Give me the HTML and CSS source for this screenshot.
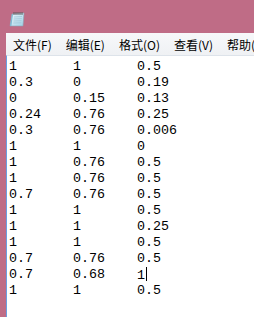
FILE: index.html
```
<!DOCTYPE html>
<html lang="zh-CN">

<head>
    <meta charset="UTF-8">
    <meta name="viewport" content="width=device-width, initial-scale=1.0">
    <title>记事本</title>
    <link rel="stylesheet" href="styles.css">
</head>

<body>
    <div class="window">
        <header class="titlebar">
            <svg class="app-icon" width="16" height="16" viewBox="0 0 16 16">
                <defs>
                    <linearGradient id="page" x1="0" y1="0" x2="1" y2="1">
                        <stop offset="0" stop-color="#eef7fb" />
                        <stop offset="1" stop-color="#9fd0e6" />
                    </linearGradient>
                </defs>
                <polygon points="3,3 15,2 14,15 1,15" fill="url(#page)" stroke="#8aa6b5" stroke-width="0.6" />
                <polygon points="1,15 3,3 4,3 2.4,15" fill="#7fb9d4" />
                <line x1="5" y1="6" x2="13" y2="5.5" stroke="#9cc3d6" stroke-width="0.7" />
                <line x1="4.8" y1="8" x2="12.8" y2="7.6" stroke="#9cc3d6" stroke-width="0.7" />
                <line x1="4.6" y1="10" x2="12.6" y2="9.7" stroke="#9cc3d6" stroke-width="0.7" />
                <line x1="4.4" y1="12" x2="12.4" y2="11.8" stroke="#9cc3d6" stroke-width="0.7" />
                <path d="M5 1v3M7 1v3M9 1v3M11 1v3M13 1v3" stroke="#555" stroke-width="0.9" />
            </svg>
        </header>
        <div class="frame">
            <nav class="menu">
                <span>文件(F)</span>
                <span>编辑(E)</span>
                <span>格式(O)</span>
                <span>查看(V)</span>
                <span>帮助(H)</span>
            </nav>
            <div class="editor">
                <div class="row"><span>1</span><span>1</span><span>0.5</span></div>
                <div class="row"><span>0.3</span><span>0</span><span>0.19</span></div>
                <div class="row"><span>0</span><span>0.15</span><span>0.13</span></div>
                <div class="row"><span>0.24</span><span>0.76</span><span>0.25</span></div>
                <div class="row"><span>0.3</span><span>0.76</span><span>0.006</span></div>
                <div class="row"><span>1</span><span>1</span><span>0</span></div>
                <div class="row"><span>1</span><span>0.76</span><span>0.5</span></div>
                <div class="row"><span>1</span><span>0.76</span><span>0.5</span></div>
                <div class="row"><span>0.7</span><span>0.76</span><span>0.5</span></div>
                <div class="row"><span>1</span><span>1</span><span>0.5</span></div>
                <div class="row"><span>1</span><span>1</span><span>0.25</span></div>
                <div class="row"><span>1</span><span>1</span><span>0.5</span></div>
                <div class="row"><span>0.7</span><span>0.76</span><span>0.5</span></div>
                <div class="row"><span>0.7</span><span>0.68</span><span>1<i class="caret"></i></span></div>
                <div class="row"><span>1</span><span>1</span><span>0.5</span></div>
            </div>
        </div>
    </div>
</body>

</html>
```

FILE: styles.css
```
* {
    box-sizing: border-box;
}

html,
body {
    margin: 0;
    height: 317px;
    overflow: hidden;
}

.window {
    height: 100%;
    background-color: #bf6c86;
    padding-left: 6px;
    display: flex;
    flex-direction: column;
}

.titlebar {
    height: 33px;
    flex: none;
    display: flex;
    align-items: center;
    padding-left: 3px;
    padding-top: 4px;
}

.frame {
    flex: 1;
    display: flex;
    flex-direction: column;
    min-width: 0;
}

.menu {
    height: 22px;
    flex: none;
    display: flex;
    align-items: center;
    white-space: nowrap;
    overflow: hidden;
    background: linear-gradient(#f7f8fa, #eff1f4);
    font-family: "Noto Sans CJK SC", "Noto Sans", sans-serif;
    font-size: 12px;
    color: #000;
}

.menu span {
    padding: 0 7px;
}

.editor {
    flex: 1;
    background-color: #fff;
    border-left: 1px solid #6a9fe0;
    border-top: 1px solid #dde3ea;
    padding: 3px 0 0 2px;
    font-family: "Liberation Mono", "DejaVu Sans Mono", monospace;
    font-size: 13.33px;
    line-height: 16px;
    color: #000;
}

.row {
    display: grid;
    grid-template-columns: 64px 64px 64px;
    height: 16px;
}

.caret {
    display: inline-block;
    width: 1px;
    height: 14px;
    background-color: #000;
    vertical-align: -2px;
    margin-left: 1px;
}
```
